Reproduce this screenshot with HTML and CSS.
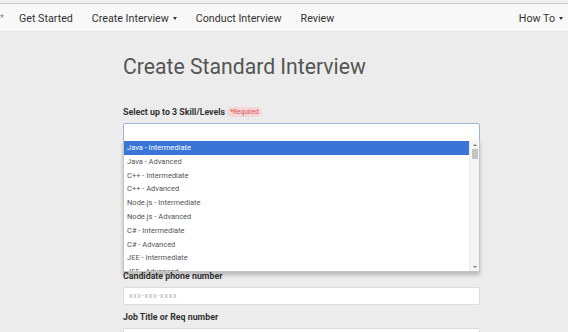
FILE: index.html
```html
<!DOCTYPE html>
<html lang="en">
<head>
  <meta charset="UTF-8">
  <meta name="viewport" content="width=device-width, initial-scale=1">
  <title>Create Standard Interview</title>
  <link rel="stylesheet" href="styles.css">
</head>
<body>
  <div class="chrome"></div>
  <nav class="navbar">
    <span class="brand">*</span>
    <a class="nav-link">Get Started</a>
    <a class="nav-link">Create Interview <span class="caret"></span></a>
    <a class="nav-link">Conduct Interview</a>
    <a class="nav-link">Review</a>
    <a class="nav-link nav-right">How To <span class="caret"></span></a>
  </nav>
  <main class="content">
    <h1 class="page-title">Create Standard Interview</h1>
    <form class="interview-form">
      <div class="field">
        <label class="field-label">Select up to 3 Skill/Levels <span class="badge">*Required</span></label>
        <div class="select-box">
          <div class="input input-focus"></div>
          <div class="dropdown">
            <ul class="options">
              <li class="option selected">Java - Intermediate</li>
              <li class="option">Java - Advanced</li>
              <li class="option">C++ - Intermediate</li>
              <li class="option">C++ - Advanced</li>
              <li class="option">Node.js - Intermediate</li>
              <li class="option">Node.js - Advanced</li>
              <li class="option">C# - Intermediate</li>
              <li class="option">C# - Advanced</li>
              <li class="option">JEE - Intermediate</li>
              <li class="option">JEE - Advanced</li>
            </ul>
            <div class="scrollbar">
              <span class="arrow arrow-up"></span>
              <span class="thumb"></span>
              <span class="track"></span>
              <span class="arrow arrow-down"></span>
            </div>
          </div>
        </div>
      </div>
      <div class="field">
        <label class="field-label">Candidate first name</label>
        <div class="input"></div>
      </div>
      <div class="field">
        <label class="field-label">Candidate last name</label>
        <div class="input"></div>
      </div>
      <div class="field">
        <label class="field-label">Candidate email</label>
        <div class="input"></div>
      </div>
      <div class="field">
        <label class="field-label">Candidate phone number</label>
        <div class="input"><span class="placeholder">xxx-xxx-xxxx</span></div>
      </div>
      <div class="field">
        <label class="field-label">Job Title or Req number</label>
        <div class="input"></div>
      </div>
    </form>
  </main>
</body>
</html>
```

FILE: styles.css
```css
:root {
  --page-bg: #ececec;
  --nav-bg: #f8f8f8;
  --text: #333;
  --muted: #555;
  --input-border: #dcdcdc;
  --highlight: #3875d7;
}
* { box-sizing: border-box; }
html, body {
  height: 100%;
  overflow: hidden;
}
body {
  margin: 0;
  font-family: Roboto, 'Liberation Sans', sans-serif;
  color: var(--text);
  background: var(--page-bg);
}
.chrome {
  height: 4px;
  background: #f1f1f1;
  border-bottom: 1px solid #c9c9c9;
}
.navbar {
  display: flex;
  align-items: center;
  height: 28px;
  padding-top: 1px;
  background: var(--nav-bg);
  border-bottom: 1px solid #e6e6e6;
  font-size: 10.7px;
}
.brand {
  width: 9px;
  color: #888;
  font-size: 9px;
}
.nav-link {
  padding: 0 9.5px;
  color: #333;
  white-space: nowrap;
  display: flex;
  align-items: center;
}
.nav-link:first-of-type {
  padding-left: 10px;
}
.nav-right {
  margin-left: auto;
  padding-right: 5px;
}
.caret {
  display: inline-block;
  margin-left: 4px;
  border-top: 3px solid #333;
  border-left: 2px solid transparent;
  border-right: 2px solid transparent;
}
.content {
  margin-left: 123px;
  width: 357px;
}
.page-title {
  margin: 23px 0 27px;
  font-size: 21.2px;
  line-height: 24px;
  font-weight: 400;
  color: var(--muted);
  white-space: nowrap;
}
.field {
  margin-bottom: 6px;
}
.field-label {
  display: block;
  height: 12px;
  line-height: 12px;
  margin-bottom: 5px;
  font-size: 8.8px;
  font-weight: 700;
  color: var(--text);
  white-space: nowrap;
}
.badge {
  display: inline-block;
  height: 10px;
  line-height: 10px;
  padding: 0 3px;
  border-radius: 5px;
  background: #f5d6d6;
  color: #d9534f;
  font-size: 6.5px;
  font-weight: 400;
  vertical-align: 1px;
}
.input {
  height: 18px;
  background: #fff;
  border: 1px solid var(--input-border);
  border-radius: 2px;
  padding-left: 5px;
  display: flex;
  align-items: center;
}
.input-focus {
  border-color: #9bb8dc;
}
.placeholder {
  font-size: 7px;
  letter-spacing: 0.8px;
  color: #b0b0b0;
}
.select-box {
  position: relative;
}
.dropdown {
  position: absolute;
  top: 17px;
  left: 0;
  right: 0;
  height: 132px;
  display: flex;
  background: #fff;
  border: 1px solid #c4c4c4;
  border-top: 0;
  box-shadow: 0 3px 4px rgba(0, 0, 0, 0.22);
  z-index: 10;
}
.options {
  flex: 1;
  margin: 0;
  padding: 1px 0 0;
  list-style: none;
  overflow: hidden;
}
.option {
  height: 13.8px;
  line-height: 13.8px;
  padding-left: 3px;
  font-size: 7.5px;
  color: #555;
  white-space: nowrap;
}
.option.selected {
  background: var(--highlight);
  color: #fff;
}
.scrollbar {
  width: 10px;
  display: flex;
  flex-direction: column;
  align-items: center;
  background: #f5f5f5;
  border-left: 1px solid #ececec;
}
.arrow {
  width: 0;
  height: 0;
  border-left: 2px solid transparent;
  border-right: 2px solid transparent;
}
.arrow-up {
  margin-top: 4px;
  border-bottom: 2px solid #777;
}
.arrow-down {
  margin-bottom: 3px;
  border-top: 2px solid #777;
}
.thumb {
  margin-top: 3px;
  width: 6px;
  height: 10px;
  background: #c3c3c3;
}
.track {
  flex: 1;
}
```
